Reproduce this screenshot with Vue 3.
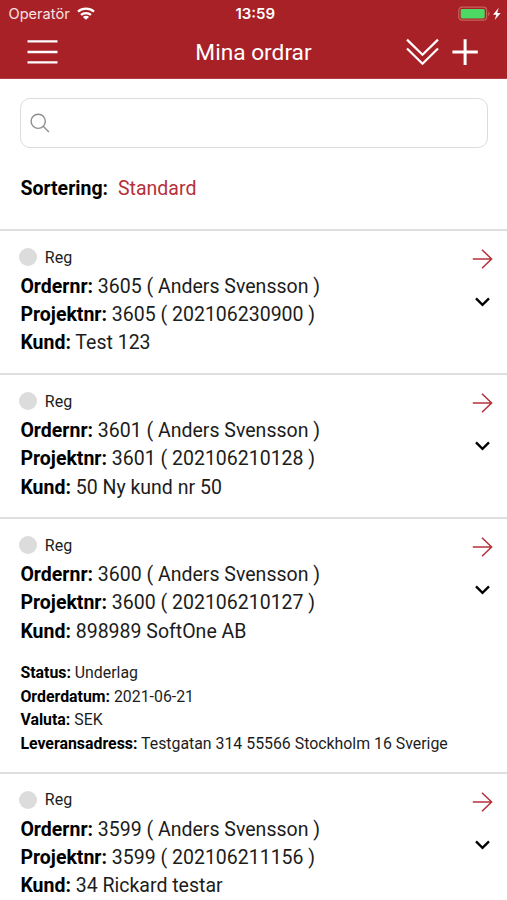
<script setup>
const orders = [
  { nr: '3605', project: '202106230900', customer: 'Test 123' },
  { nr: '3601', project: '202106210128', customer: '50 Ny kund nr 50' },
  {
    nr: '3600',
    project: '202106210127',
    customer: '898989 SoftOne AB',
    details: [
      ['Status:', 'Underlag'],
      ['Orderdatum:', '2021-06-21'],
      ['Valuta:', 'SEK'],
      ['Leveransadress:', 'Testgatan 314 55566 Stockholm 16 Sverige'],
    ],
  },
  { nr: '3599', project: '202106211156', customer: '34 Rickard testar' },
]
</script>

<template>
  <div class="screen">
    <header class="top">
      <div class="status">
        <div class="carrier">
          <span>Operatör</span>
          <svg class="wifi" width="18" height="13" viewBox="0 0 18 13">
            <path d="M1 4.6C5.4.6 12.6.6 17 4.6M4 7.9c2.8-2.5 7.2-2.5 10 0" fill="none" stroke="#fff" stroke-width="2.2" />
            <path d="M9 12.8 5.9 9.9c1.8-1.5 4.4-1.5 6.2 0z" fill="#fff" />
          </svg>
        </div>
        <span class="clock">13:59</span>
        <svg class="battery" width="44" height="16" viewBox="0 0 44 16">
          <rect x=".8" y="1.2" width="27.8" height="13" rx="3.2" fill="none" stroke="#c9635c" stroke-width="1.2" />
          <rect x="2.7" y="3.1" width="24" height="9.3" rx="1.3" fill="#4cd964" />
          <path d="M30.2 5.4c1.8.7 1.8 3.9 0 4.6z" fill="#c9635c" />
          <path d="M40.7 1.8 35 8.7h3.3l-1.6 5.2 6-7h-3.5z" fill="#fff" />
        </svg>
      </div>
      <div class="nav">
        <svg class="menu" width="31" height="26" viewBox="0 0 31 26">
          <path d="M.5 2.4h30M.5 13h30M.5 23.4h30" stroke="#fff" stroke-width="2.3" />
        </svg>
        <h1>Mina ordrar</h1>
        <div class="actions">
          <svg width="33" height="28" viewBox="0 0 33 28" fill="none" stroke="#fff" stroke-width="2.2">
            <path d="m1 1.6 15.5 15.2L32 1.6M1 10.5l15.5 15.2L32 10.5" />
          </svg>
          <svg width="26" height="28" viewBox="0 0 26 28" fill="none" stroke="#fff" stroke-width="3">
            <path d="M.4 14h25.4M13.1 1.3v25.6" />
          </svg>
        </div>
      </div>
    </header>

    <div class="search">
      <svg width="20" height="20" viewBox="0 0 20 20" fill="none" stroke="#8d8d8d" stroke-width="1.4">
        <circle cx="8.2" cy="8.3" r="7.1" />
        <path d="m13.2 13.3 5.7 5.6" />
      </svg>
    </div>
    <div class="sorting"><b>Sortering:</b><span>Standard</span></div>

    <section v-for="order in orders" :key="order.nr" class="order">
      <div class="info">
        <div class="reg"><i class="dot"></i><span>Reg</span></div>
        <p><b>Ordernr:</b> {{ order.nr }} ( Anders Svensson )</p>
        <p><b>Projektnr:</b> {{ order.nr }} ( {{ order.project }} )</p>
        <p><b>Kund:</b> {{ order.customer }}</p>
        <div v-if="order.details" class="details">
          <p v-for="[label, value] in order.details" :key="label"><b>{{ label }}</b> {{ value }}</p>
        </div>
      </div>
      <div class="links">
        <svg width="21" height="20" viewBox="0 0 21 20" fill="none" stroke="#b5303a" stroke-width="1.5">
          <path d="M.8 10h19M10 .8l9.6 9.2-9.6 9.2" />
        </svg>
        <svg width="15" height="10" viewBox="0 0 15 10" fill="none" stroke="#000" stroke-width="2.4">
          <path d="m1 1.4 6.5 6.4L14 1.4" />
        </svg>
      </div>
    </section>
  </div>
</template>

<style>
body {
  margin: 0;
  overflow: hidden;
}
</style>

<style scoped>
.screen {
  width: 507px;
  height: 900px;
  overflow: hidden;
  background: #fff;
  color: #1c1c1c;
  font-family: Roboto, sans-serif;
}
.top {
  box-sizing: border-box;
  height: 79px;
  background: #a72127;
  color: #fff;
  border-bottom: 1px solid #b33b41;
}
.status {
  display: grid;
  grid-template-columns: 1fr auto 1fr;
  align-items: center;
  height: 27px;
  padding: 0 5px 0 8.5px;
  font-family: Inter, sans-serif;
  font-size: 14.6px;
}
.carrier {
  display: flex;
  align-items: center;
  gap: 7px;
  color: #f8e2e2;
}
.clock {
  font-weight: 600;
  font-size: 15px;
}
.battery {
  justify-self: end;
}
.nav {
  display: grid;
  grid-template-columns: 1fr auto 1fr;
  align-items: center;
  height: 50px;
  padding: 0 29px 0 27px;
}
h1 {
  margin: 0;
  padding-left: 2px;
  font-size: 22.7px;
  font-weight: 400;
}
.actions {
  display: flex;
  justify-content: flex-end;
  gap: 13px;
}
.search {
  box-sizing: border-box;
  display: flex;
  align-items: center;
  height: 50px;
  margin: 19px 19px 0 20px;
  padding-left: 9px;
  border: 1.5px solid #dcdcdc;
  border-radius: 10px;
}
.sorting {
  display: flex;
  align-items: center;
  gap: 10px;
  height: 81px;
  padding-left: 20.4px;
  font-size: 19.5px;
}
.sorting span {
  color: #b5303a;
}
b {
  color: #000;
  font-weight: 700;
}
.order {
  display: flex;
  justify-content: space-between;
  box-sizing: border-box;
  min-height: 144.1px;
  padding: 12px 14px 10px 20.4px;
  border-top: 2px solid #dedede;
}
p {
  margin: 0;
  font-size: 19.5px;
  line-height: 28.2px;
  white-space: nowrap;
}
.reg {
  display: flex;
  align-items: center;
  gap: 8px;
  height: 28px;
  margin: 0 0 2px -1.6px;
  font-size: 16px;
}
.dot {
  width: 18px;
  height: 18px;
  border-radius: 50%;
  background: #dcdcdc;
}
.details {
  padding: 15px 0 6px;
}
.details p {
  font-size: 15.87px;
  line-height: 23.7px;
}
.links {
  display: flex;
  flex-direction: column;
  align-items: center;
  gap: 28px;
  padding-top: 6px;
}
</style>
